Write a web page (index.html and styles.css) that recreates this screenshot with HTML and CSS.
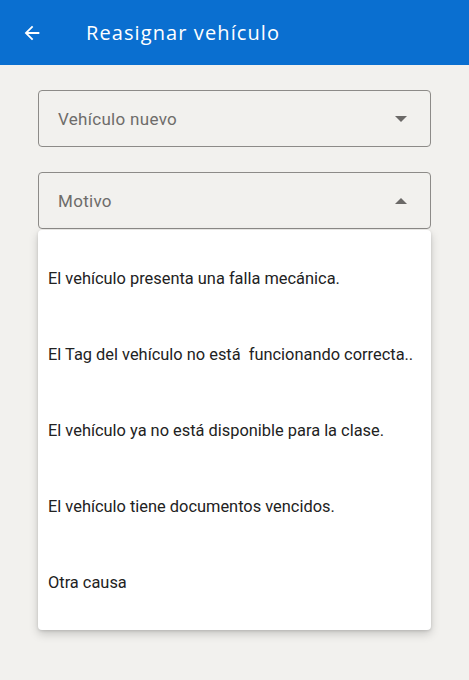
FILE: index.html
```html
<!DOCTYPE html>
<html lang="es">
<head>
  <meta charset="UTF-8">
  <meta name="viewport" content="width=device-width, initial-scale=1.0">
  <title>Reasignar vehículo</title>
  <link rel="stylesheet" href="styles.css">
</head>
<body>
  <header class="app-bar">
    <button class="back-btn" aria-label="Volver">
      <svg width="22" height="22" viewBox="0 0 24 24"><path d="M20 11H7.83l5.59-5.59L12 4l-8 8 8 8 1.41-1.41L7.83 13H20v-2z" fill="#fff"/></svg>
    </button>
    <h1 class="title">Reasignar vehículo</h1>
  </header>

  <main class="form">
    <div class="select">
      <span class="select-label">Vehículo nuevo</span>
      <span class="caret down"></span>
    </div>

    <div class="select-wrap">
      <div class="select">
        <span class="select-label">Motivo</span>
        <span class="caret up"></span>
      </div>
      <ul class="menu">
        <li>El vehículo presenta una falla mecánica.</li>
        <li>El Tag del vehículo no está&nbsp; funcionando correcta..</li>
        <li>El vehículo ya no está disponible para la clase.</li>
        <li>El vehículo tiene documentos vencidos.</li>
        <li>Otra causa</li>
      </ul>
    </div>
  </main>
</body>
</html>
```
FILE: styles.css
```css
body {
  margin: 0;
  background: #f2f1ee;
  font-family: Roboto, "Noto Sans", sans-serif;
  height: 680px;
  overflow: hidden;
}

.app-bar {
  height: 65px;
  background: #0a6fd0;
  display: flex;
  align-items: center;
  box-sizing: border-box;
  padding-left: 21px;
}

.back-btn {
  background: none;
  border: none;
  padding: 0;
  width: 22px;
  height: 22px;
  display: flex;
  cursor: pointer;
}

.title {
  margin: 0 0 0 43px;
  color: #fff;
  font-family: "Open Sans", sans-serif;
  font-weight: 500;
  font-size: 20px;
  letter-spacing: 1.1px;
}

.form {
  padding: 25px 38px 0 38px;
  display: flex;
  flex-direction: column;
  gap: 25px;
}

.select {
  height: 57px;
  box-sizing: border-box;
  border: 1px solid #8d8b88;
  border-radius: 4px;
  display: flex;
  align-items: center;
  justify-content: space-between;
  padding: 0 23px 0 19px;
}

.select-label {
  color: #6e6c6a;
  font-size: 17px;
  letter-spacing: 0.3px;
}

.caret {
  width: 0;
  height: 0;
  border-left: 6px solid transparent;
  border-right: 6px solid transparent;
}

.caret.down {
  border-top: 6px solid #6b6967;
}

.caret.up {
  border-bottom: 6px solid #6b6967;
}

.select-wrap {
  position: relative;
}

.menu {
  position: absolute;
  top: 58px;
  left: 0;
  right: 0;
  margin: 0;
  padding: 10px 0;
  list-style: none;
  background: #fff;
  border-radius: 4px;
  box-shadow: 0 4px 10px rgba(0, 0, 0, 0.18), 0 1px 3px rgba(0, 0, 0, 0.12);
}

.menu li {
  height: 76px;
  display: flex;
  align-items: center;
  padding-left: 10px;
  color: #222;
  font-size: 16.4px;
  white-space: nowrap;
}
```
